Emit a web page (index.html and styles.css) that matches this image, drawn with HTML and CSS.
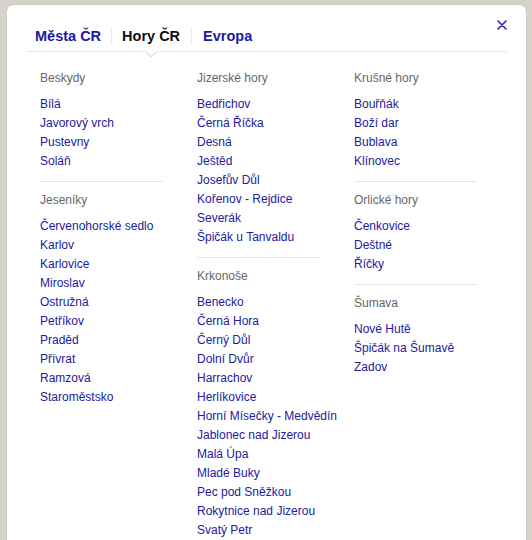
FILE: index.html
```html
<!DOCTYPE html>
<html lang="cs">
<head>
<meta charset="utf-8">
<title>Hory ČR</title>
<link rel="stylesheet" href="styles.css">
</head>
<body>
<div class="panel">
  <a class="close" href="#" aria-label="Zavřít">
    <svg width="10" height="10" viewBox="0 0 10 10"><path d="M1 1 L9 9 M9 1 L1 9" stroke="#2a22a8" stroke-width="1.6" stroke-linecap="round"/></svg>
  </a>
  <div class="tabs">
    <a class="tab" href="#">Města ČR</a>
    <span class="sep"></span>
    <a class="tab active" href="#">Hory ČR</a>
    <span class="sep sep-wide"></span>
    <a class="tab" href="#">Evropa</a>
  </div>
  <div class="cols">
    <div class="col">
      <div class="group">
        <div class="head">Beskydy</div>
        <a href="#">Bílá</a><a href="#">Javorový vrch</a><a href="#">Pustevny</a><a href="#">Soláň</a>
      </div>
      <div class="group">
        <div class="head">Jeseníky</div>
        <a href="#">Červenohorské sedlo</a><a href="#">Karlov</a><a href="#">Karlovice</a><a href="#">Miroslav</a><a href="#">Ostružná</a><a href="#">Petříkov</a><a href="#">Praděd</a><a href="#">Přívrat</a><a href="#">Ramzová</a><a href="#">Staroměstsko</a>
      </div>
    </div>
    <div class="col">
      <div class="group">
        <div class="head">Jizerské hory</div>
        <a href="#">Bedřichov</a><a href="#">Černá Říčka</a><a href="#">Desná</a><a href="#">Ještěd</a><a href="#">Josefův Důl</a><a href="#">Kořenov - Rejdice</a><a href="#">Severák</a><a href="#">Špičák u Tanvaldu</a>
      </div>
      <div class="group">
        <div class="head">Krkonoše</div>
        <a href="#">Benecko</a><a href="#">Černá Hora</a><a href="#">Černý Důl</a><a href="#">Dolní Dvůr</a><a href="#">Harrachov</a><a href="#">Herlíkovice</a><a href="#">Horní Mísečky - Medvědín</a><a href="#">Jablonec nad Jizerou</a><a href="#">Malá Úpa</a><a href="#">Mladé Buky</a><a href="#">Pec pod Sněžkou</a><a href="#">Rokytnice nad Jizerou</a><a href="#">Svatý Petr</a>
      </div>
    </div>
    <div class="col">
      <div class="group">
        <div class="head">Krušné hory</div>
        <a href="#">Bouřňák</a><a href="#">Boží dar</a><a href="#">Bublava</a><a href="#">Klínovec</a>
      </div>
      <div class="group">
        <div class="head">Orlické hory</div>
        <a href="#">Čenkovice</a><a href="#">Deštné</a><a href="#">Říčky</a>
      </div>
      <div class="group">
        <div class="head">Šumava</div>
        <a href="#">Nové Hutě</a><a href="#">Špičák na Šumavě</a><a href="#">Zadov</a>
      </div>
    </div>
  </div>
</div>
</body>
</html>
```
FILE: styles.css
```css
html, body {
  margin: 0;
  padding: 0;
  height: 100%;
  overflow: hidden;
}
body {
  background: #d6d4ca;
  font-family: "Liberation Sans", Arial, Helvetica, sans-serif;
  padding: 5px 0 0 7px;
  box-sizing: border-box;
}
.panel {
  position: relative;
  width: 519px;
  min-height: 560px;
  background: #fff;
  border-radius: 6px 6px 0 0;
  box-shadow: 0 0 1px rgba(0,0,0,0.35);
  padding: 0 19px 0 20px;
  box-sizing: border-box;
}
.close {
  position: absolute;
  right: 19px;
  top: 15px;
  display: block;
  width: 10px;
  height: 10px;
}
.close svg { display: block; }
.tabs {
  position: relative;
  display: flex;
  align-items: center;
  padding: 21px 0 5px 8px;
  border-bottom: 1px solid #e8e8e8;
}
.tab {
  font-size: 14.5px;
  font-weight: bold;
  line-height: 20px;
  color: #1c1a9e;
  text-decoration: none;
}
.tab.active {
  color: #111;
  position: relative;
}
.tab.active::before,
.tab.active::after {
  content: "";
  position: absolute;
  left: 50%;
  width: 0;
  height: 0;
  border-style: solid;
  border-color: transparent;
}
.tab.active::before {
  top: 26px;
  margin-left: -6px;
  border-width: 6px 6px 0 6px;
  border-top-color: #e4e4e4;
}
.tab.active::after {
  top: 25px;
  margin-left: -5px;
  border-width: 5px 5px 0 5px;
  border-top-color: #fff;
}
.sep {
  width: 1px;
  height: 18px;
  background: #ececec;
  margin: 0 10px;
}
.sep-wide {
  margin: 0 11px 0 11px;
}
.cols {
  display: flex;
  padding: 17px 0 0 13px;
}
.col {
  width: 157px;
  flex: none;
}
.group {
  width: 123px;
  padding: 0 0 10px;
}
.group + .group {
  border-top: 1px solid #e6e6e6;
  padding-top: 9px;
}
.head {
  font-size: 12px;
  line-height: 19px;
  color: #666;
  margin-bottom: 7px;
  white-space: nowrap;
}
.group a {
  display: block;
  font-size: 12px;
  line-height: 19px;
  color: #22209e;
  text-decoration: none;
  white-space: nowrap;
}
```
